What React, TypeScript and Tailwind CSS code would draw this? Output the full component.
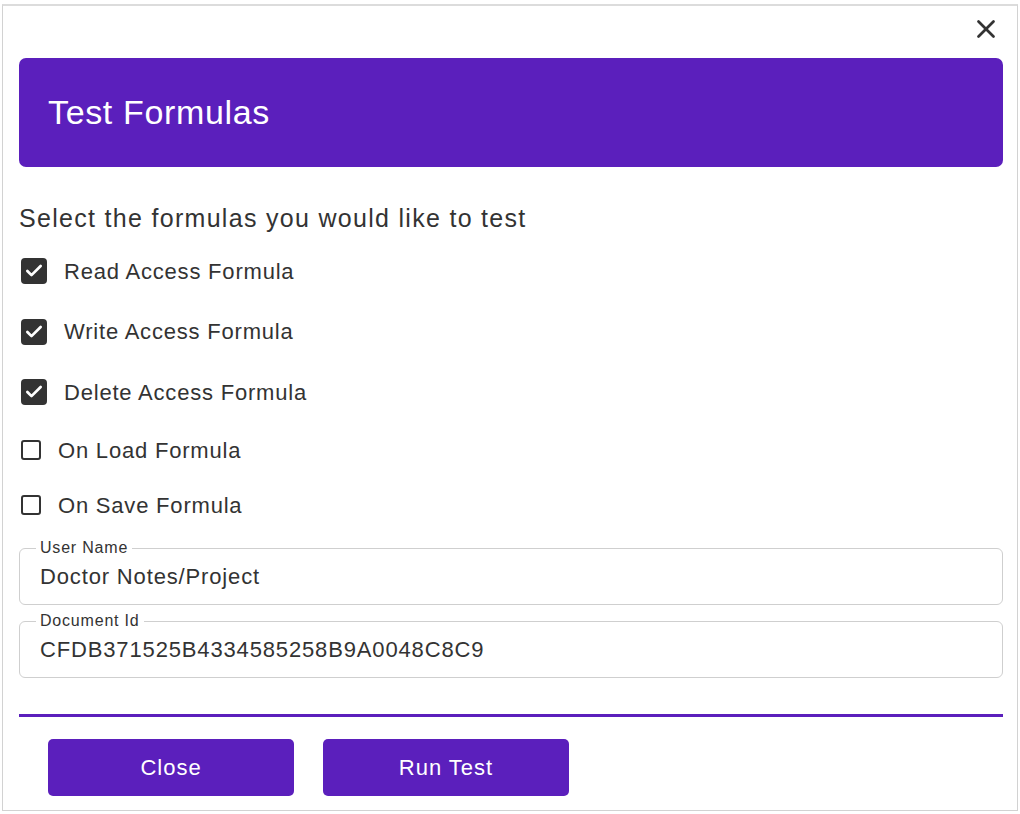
import { X, Check } from 'lucide-react'

const font = { fontFamily: '"Liberation Sans", Arial, sans-serif' }

interface Option {
  label: string
  checked: boolean
}

const options: Option[] = [
  { label: 'Read Access Formula', checked: true },
  { label: 'Write Access Formula', checked: true },
  { label: 'Delete Access Formula', checked: true },
  { label: 'On Load Formula', checked: false },
  { label: 'On Save Formula', checked: false },
]

function CheckRow({ opt }: { opt: Option }) {
  if (opt.checked) {
    return (
      <div className="flex items-center h-[60.5px]">
        <span className="ml-[2px] w-[26px] h-[26px] rounded-[4px] bg-[#333333] flex items-center justify-center">
          <Check className="w-[20px] h-[20px] text-white" strokeWidth={3.25} />
        </span>
        <span className="ml-[17px] text-[22px] tracking-[0.8px] text-[#333333]">{opt.label}</span>
      </div>
    )
  }
  return (
    <div className="flex items-center h-[55px]">
      <span className="ml-[2px] w-[20px] h-[20px] rounded-[3px] border-2 border-[#333333] bg-white" />
      <span className="ml-[17px] text-[22px] tracking-[0.8px] text-[#333333]">{opt.label}</span>
    </div>
  )
}

function Field({ label, value }: { label: string; value: string }) {
  return (
    <div className="relative h-[57px] rounded-[6px] border border-[#cfcfcf] flex items-center px-[20px]">
      <span className="absolute left-[16px] -top-[11px] bg-white px-[4px] text-[16px] leading-[20px] tracking-[0.8px] text-[#333333]">
        {label}
      </span>
      <span className="text-[22px] tracking-[0.85px] text-[#333333] pt-[1px]">{value}</span>
    </div>
  )
}

export default function App() {
  return (
    <div className="w-[1020px] h-[814px] bg-white pt-[4px] pl-[2px]" style={font}>
      <div className="w-[1016px] h-[807px] border border-[#d2d2d2] border-t-2 border-t-[#dcdcdc] bg-white pl-[16px] pr-[14px]">
        <div className="h-[52px] flex justify-end items-start pt-[8px]">
          <button className="mr-[2px] text-[#333333]">
            <X className="w-[30px] h-[30px]" strokeWidth={2.2} />
          </button>
        </div>
        <div className="h-[109px] rounded-[7px] bg-[#5b1fbc] flex items-center pl-[29px]">
          <h1 className="text-[34px] text-white tracking-[0.65px]">Test Formulas</h1>
        </div>
        <p className="mt-[36px] text-[25px] tracking-[1.3px] text-[#333333] leading-[30px]">
          Select the formulas you would like to test
        </p>
        <div className="mt-[8px]">
          {options.map(o => (
            <CheckRow key={o.label} opt={o} />
          ))}
        </div>
        <div className="mt-[15px] flex flex-col gap-[16px]">
          <Field label="User Name" value="Doctor Notes/Project" />
          <Field label="Document Id" value="CFDB371525B4334585258B9A0048C8C9" />
        </div>
        <div className="mt-[36px] h-[3px] bg-[#5b1fbc]" />
        <div className="mt-[22px] flex gap-[29px] pl-[29px]">
          <button className="w-[246px] h-[57px] rounded-[5px] bg-[#5b1fbc] text-white text-[22px] tracking-[1px]">
            Close
          </button>
          <button className="w-[246px] h-[57px] rounded-[5px] bg-[#5b1fbc] text-white text-[22px] tracking-[1px]">
            Run Test
          </button>
        </div>
      </div>
    </div>
  )
}
